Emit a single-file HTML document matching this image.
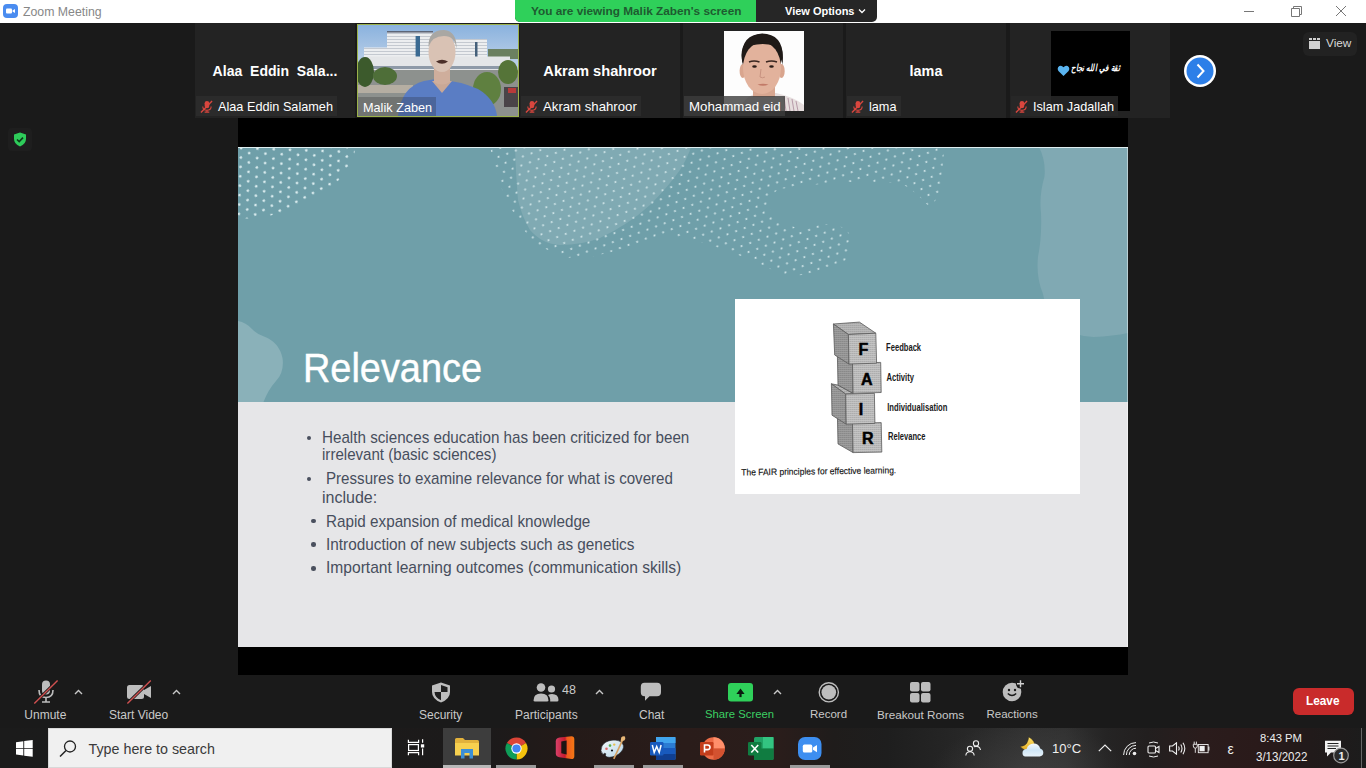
<!DOCTYPE html>
<html><head><meta charset="utf-8">
<style>
*{margin:0;padding:0;box-sizing:border-box}
html,body{width:1366px;height:768px;overflow:hidden;background:#1a1a1a;font-family:"Liberation Sans",sans-serif;position:relative}
.a{position:absolute}
.nw{white-space:nowrap}
#title{left:0;top:0;width:1366px;height:23px;background:#fff}
#title .t{left:23px;top:5px;font-size:12.3px;color:#878787}
#banner{left:515px;top:0;width:362px;height:22px;border-radius:0 0 5px 5px;overflow:hidden;background:#262626}
#banner .g{left:0;top:0;width:241px;height:22px;background:#2fd05a}
#banner .gt{left:16px;top:4px;font-size:11.8px;font-weight:bold;color:#1e5b30}
#banner .vt{left:270px;top:5px;font-size:11px;font-weight:bold;color:#fff}
.tile{top:23px;height:95px;background:#232323;overflow:hidden}
.tile .big{left:0;width:100%;text-align:center;top:39.7px;color:#fff;font-weight:bold;font-size:14.4px}
.tile .nm{left:1px;top:73px;height:20px;background:#2b2b2b;color:#fff;font-size:12.7px;line-height:22px;padding:0 4px 0 22px}
.tile .nm.nomic{padding-left:5px;background:rgba(40,40,40,0.75)}
.mic{left:4px;top:4px;width:13px;height:13px}
#screen{left:238px;top:118px;width:890px;height:557px;background:#000}
#slide{left:238px;top:147px;width:890px;height:500px;background:#e6e6e8;overflow:hidden}
#toolbar{left:0;top:675px;width:1366px;height:53px;background:#1a1a1a}
.tl{color:#c9c9c9;font-size:12px;top:33px}
.car{top:13px}
#taskbar{left:0;top:728px;width:1366px;height:40px;background:radial-gradient(ellipse 100px 55px at 1030px 48px,rgba(75,75,75,0.5),rgba(75,75,75,0) 100%),linear-gradient(90deg,#1b1b1b 0%,#1c1a1a 36%,#241a18 42%,#2a1c1a 50%,#2a1d1b 57%,#1f1c1b 61%,#1e1e1e 65%,#262626 70%,#303030 75%,#313131 78%,#252424 81%,#221f1f 84%,#2a1c1c 88%,#2a1a1a 92%,#211a1a 96%,#1c1c1c 100%)}
</style></head><body>
<div id="title" class="a">
  <svg class="a" style="left:3px;top:4px" width="15" height="14" viewBox="0 0 15 14"><rect x="0" y="0" width="15" height="14" rx="4" fill="#4a8cf0"/><rect x="3" y="4.5" width="6" height="5" rx="1" fill="#fff"/><path d="M9.5 6.5 L12 5 L12 9 L9.5 7.5Z" fill="#fff"/></svg>
  <div class="a t nw">Zoom Meeting</div>
  <svg class="a" style="left:1240px;top:5px" width="110" height="14" viewBox="0 0 110 14">
    <path d="M4 6.5 H14" stroke="#777" stroke-width="1"/>
    <path d="M51.5 3.5 H59.5 V11.5 H51.5Z M53.5 3.5 V1.5 H61.5 V9.5 H59.5" fill="none" stroke="#777" stroke-width="1"/>
    <path d="M96 1 L106 11 M106 1 L96 11" stroke="#777" stroke-width="1"/>
  </svg>
</div>
<div id="banner" class="a"><div class="a g"></div><div class="a gt nw">You are viewing Malik Zaben's screen</div><div class="a vt nw">View Options</div>
  <svg class="a" style="left:343px;top:8px" width="8" height="6" viewBox="0 0 8 6"><path d="M1 1.5 L4 4.5 L7 1.5" fill="none" stroke="#fff" stroke-width="1.3"/></svg>
</div>

<!-- participant strip -->
<div id="strip">
  <div class="a tile" style="left:195px;width:160px">
    <div class="a big nw" style="transform:scaleX(0.975)">Alaa&nbsp; Eddin&nbsp; Sala...</div>
    <div class="a nm nw"><svg class="a mic" width="14" height="14" viewBox="0 0 14 14"><rect x="5" y="1" width="5" height="8" rx="2.5" fill="#d9463e"/><path d="M3 7 Q3 11 7.5 11 Q12 11 12 7 M7.5 11 V13 M5 13 H10" fill="none" stroke="#d9463e" stroke-width="1.2"/><path d="M1 13.5 L13 1" stroke="#d9463e" stroke-width="1.5"/></svg>Alaa Eddin Salameh</div>
  </div>
  <div class="a tile" style="left:357px;width:162px;top:24px;height:93px;border:1px solid #9bb24a;background:#6f8aa3">
    <svg class="a" style="left:0;top:0" width="160" height="91" viewBox="0 0 160 91">
      <defs><linearGradient id="sky" x1="0" y1="0" x2="0" y2="1"><stop offset="0" stop-color="#8ab2de"/><stop offset="0.35" stop-color="#b3cbe6"/><stop offset="1" stop-color="#c8d8e8"/></linearGradient>
      <pattern id="win" width="4" height="3" patternUnits="userSpaceOnUse"><rect width="4" height="3" fill="#eceef0"/><rect y="2" width="4" height="1" fill="#c4c9d0"/></pattern></defs>
      <rect width="160" height="91" fill="url(#sky)"/>
      <rect x="130" y="24" width="30" height="10" fill="#6b8060"/>
      <rect x="6" y="22.5" width="24" height="12" fill="url(#win)"/>
      <rect x="29" y="6.6" width="46" height="27" fill="url(#win)"/>
      <rect x="29" y="6" width="46" height="1.6" fill="#5d6678"/>
      <rect x="57.6" y="11" width="4.4" height="22" fill="#3a6a92"/>
      <rect x="96" y="14" width="33" height="20" fill="url(#win)"/>
      <rect x="117" y="17" width="2.5" height="17" fill="#44607a"/>
      <rect x="10" y="31.5" width="142" height="14" fill="#e4e6e8"/>
      <rect x="14" y="41" width="130" height="3" fill="#8e9aa8"/>
      <rect x="0" y="45" width="160" height="46" fill="#8d918e"/>
      <rect x="0" y="60" width="55" height="8" fill="#b5aea2"/>
      <ellipse cx="7" cy="47" rx="9" ry="15" fill="#3c5a2c"/>
      <ellipse cx="27" cy="51" rx="12" ry="9" fill="#4e6e38"/>
      <ellipse cx="129" cy="64" rx="14" ry="17" fill="#5f8040"/>
      <ellipse cx="150" cy="47" rx="10" ry="12" fill="#557438"/>
      <rect x="146" y="62" width="14" height="20" fill="#4a4448"/>
      <rect x="150" y="63" width="8" height="5" fill="#b83a3a"/>
      <path d="M40 91 Q43 62 66 56 L78 54 Q102 56 120 64 Q137 74 139 91Z" fill="#5a7dc4"/>
      <path d="M74 56 L84 68 L94 56Z" fill="#c9a896"/>
      <path d="M76 40 L76 57 Q84 62 92 57 L92 40Z" fill="#cfae9c"/>
      <ellipse cx="84" cy="27" rx="13.5" ry="20" fill="#d9c2b4"/>
      <path d="M70.5 22 Q70 5 86 5 Q99 6 98.5 24 Q97 11 86 11 Q74 11 70.5 22Z" fill="#a9a7a3"/>
      <path d="M78 36.5 Q84 33 90 36.5 Q84 41 78 36.5Z" fill="#4a2e28"/>
    </svg>
    <div class="a nm nomic nw" style="left:0;top:72px;background:rgba(30,30,30,0.25)">Malik Zaben</div>
  </div>
  <div class="a tile" style="left:520px;width:160px">
    <div class="a big nw" style="transform:scaleX(1.02)">Akram shahroor</div>
    <div class="a nm nw"><svg class="a mic" width="14" height="14" viewBox="0 0 14 14"><rect x="5" y="1" width="5" height="8" rx="2.5" fill="#d9463e"/><path d="M3 7 Q3 11 7.5 11 Q12 11 12 7 M7.5 11 V13 M5 13 H10" fill="none" stroke="#d9463e" stroke-width="1.2"/><path d="M1 13.5 L13 1" stroke="#d9463e" stroke-width="1.5"/></svg><span style="font-size:13.2px">Akram shahroor</span></div>
  </div>
  <div class="a tile" style="left:683px;width:160px">
    <svg class="a" style="left:41px;top:8px" width="80" height="80" viewBox="0 0 80 80">
      <rect width="80" height="80" fill="#fdfdfd"/>
      <path d="M14 80 Q20 67 30 63 L52 62 Q70 66 80 74 V80Z" fill="#e6dede"/>
      <path d="M60 66 L62 80 M64 67 L66 80 M68 68 L70 80 M72 70 L74 80" stroke="#b79aa8" stroke-width="1"/>
      <rect x="29" y="50" width="22" height="16" fill="#d7a690"/>
      <ellipse cx="18.8" cy="40" rx="3.2" ry="7" fill="#d9a58e"/>
      <ellipse cx="57.5" cy="40" rx="3.2" ry="7" fill="#d9a58e"/>
      <ellipse cx="38" cy="24" rx="20.5" ry="21" fill="#1f1a17"/><ellipse cx="38" cy="37" rx="19" ry="26" fill="#e2b29c"/>
      <path d="M18.5 34 Q14 4 38 2.5 Q62 3 58.5 34 Q57 18 50 14.5 Q39 11.5 27 14.5 Q20 19 18.5 34Z" fill="#1f1a17"/>
      <path d="M25 31 Q30 29 35.5 31 M42 31 Q47.5 29 53 31" stroke="#3a2620" stroke-width="1.6" fill="none"/>
      <ellipse cx="30.5" cy="35.5" rx="2.3" ry="1.3" fill="#2a1c18"/>
      <ellipse cx="47.5" cy="35.5" rx="2.3" ry="1.3" fill="#2a1c18"/>
      <path d="M37 38 L36 46 Q38.5 47.5 41 46" stroke="#c89280" stroke-width="1" fill="none"/>
      <path d="M33.5 53.5 Q39 52 44.5 53.5 Q39 56 33.5 53.5Z" fill="#c27a68"/>
    </svg>
    <div class="a nm nomic nw" style="background:rgba(60,60,60,0.8);font-size:13.3px">Mohammad eid</div>
  </div>
  <div class="a tile" style="left:846px;width:160px">
    <div class="a big nw">lama</div>
    <div class="a nm nw"><svg class="a mic" width="14" height="14" viewBox="0 0 14 14"><rect x="5" y="1" width="5" height="8" rx="2.5" fill="#d9463e"/><path d="M3 7 Q3 11 7.5 11 Q12 11 12 7 M7.5 11 V13 M5 13 H10" fill="none" stroke="#d9463e" stroke-width="1.2"/><path d="M1 13.5 L13 1" stroke="#d9463e" stroke-width="1.5"/></svg>lama</div>
  </div>
  <div class="a tile" style="left:1010px;width:160px">
    <div class="a" style="left:41px;top:8px;width:79px;height:80px;background:#000"></div>
    <div class="a nw" style="left:47px;top:39.5px;width:13px;height:12px">
      <svg width="13" height="12" viewBox="0 0 14 13"><path d="M7 12 L1.5 6.5 Q-0.5 3 2.5 1.2 Q5 0 7 2.5 Q9 0 11.5 1.2 Q14.5 3 12.5 6.5Z" fill="#5ab4f0"/></svg>
    </div>
    <div class="a nw" style="left:61px;top:39px;color:#fff;font-size:9.5px;font-weight:bold;font-style:italic;transform:scaleX(0.75);transform-origin:0 0">&#x62B;&#x642;&#x629; &#x641;&#x64A; &#x627;&#x644;&#x644;&#x647; &#x646;&#x62C;&#x627;&#x62D;</div>
    <div class="a nm nw" style="background:rgba(40,40,40,0.85)"><svg class="a mic" width="14" height="14" viewBox="0 0 14 14"><rect x="5" y="1" width="5" height="8" rx="2.5" fill="#d9463e"/><path d="M3 7 Q3 11 7.5 11 Q12 11 12 7 M7.5 11 V13 M5 13 H10" fill="none" stroke="#d9463e" stroke-width="1.2"/><path d="M1 13.5 L13 1" stroke="#d9463e" stroke-width="1.5"/></svg>Islam Jadallah</div>
  </div>
  <svg class="a" style="left:1183px;top:54px" width="34" height="34" viewBox="0 0 34 34"><circle cx="17" cy="17" r="16" fill="#fff"/><circle cx="17" cy="17" r="13.5" fill="#2d7fe8"/><path d="M14.5 10.5 L20.5 17 L14.5 23.5" fill="none" stroke="#fff" stroke-width="2"/></svg>
  <div class="a" style="left:1303px;top:32px;width:54px;height:24px;background:#222;border-radius:6px">
    <svg class="a" style="left:6px;top:6px" width="11" height="11" viewBox="0 0 11 11"><rect x="0" y="3" width="11" height="8" fill="#d0d0d0"/><rect x="0" y="0" width="3" height="2" fill="#d0d0d0"/><rect x="4" y="0" width="3" height="2" fill="#d0d0d0"/><rect x="8" y="0" width="3" height="2" fill="#d0d0d0"/></svg>
    <div class="a nw" style="left:23px;top:4px;color:#d8d8d8;font-size:11.8px">View</div>
  </div>
</div>

<!-- shield -->
<div class="a" style="left:8px;top:128px;width:24px;height:23px;background:#1e1e1e;border-radius:4px"></div>
<svg class="a" style="left:13px;top:132px" width="14" height="15" viewBox="0 0 14 15"><path d="M7 0.5 L13 2.5 V7 Q13 12 7 14.5 Q1 12 1 7 V2.5Z" fill="#2ecc5a"/><path d="M4 7.5 L6.2 9.6 L10 5.6" fill="none" stroke="#0d3a1a" stroke-width="1.6"/></svg>

<div id="screen" class="a"></div>
<div id="slide" class="a">
  <svg class="a" style="left:0;top:0" width="890" height="500" viewBox="0 0 890 500">
    <defs>
      <pattern id="dots" x="0" y="0" width="9.2" height="15.9" patternUnits="userSpaceOnUse" patternTransform="rotate(-20)">
        <circle cx="2.3" cy="3" r="1.05" fill="#d2e7ea"/><circle cx="6.9" cy="10.95" r="1.05" fill="#d2e7ea"/>
      </pattern>
      <pattern id="dots2" x="0" y="0" width="9.4" height="16.3" patternUnits="userSpaceOnUse" patternTransform="rotate(-28)">
        <circle cx="2.3" cy="2.5" r="1.3" fill="#dff0f2"/><circle cx="7" cy="10.65" r="1.3" fill="#dff0f2"/>
      </pattern>
    </defs>
    <rect x="0" y="0" width="890" height="255" fill="#6f9fa9"/>
    <rect x="0" y="255" width="890" height="245" fill="#e6e6e8"/>
    <path d="M801 0 Q808 14 806.5 29.5 Q801 48 803 66 Q804 90 800 109.7 Q798 130 804.7 146 Q810 170 823 179 Q838 190 855.7 190 Q875 189 890 186 L890 0Z" fill="#80a9b3"/>
    <path d="M0 174 Q8 175.5 14 182 Q18 186.5 26 189.5 Q41 195 44.5 211 Q46.5 225 38 234 Q30 243 25.5 255 L0 255Z" fill="#8ab1b9"/>
    <path d="M277 0 Q278 30 280 53 Q284 70 292 83 Q304 97 322 98 Q344 98 362 91 Q390 78 412 58 Q430 40 442 23 Q450 10 453 0Z" fill="#80aab3"/>
    <path d="M252 0 Q256 20 263 40 Q269 56 277 68 Q286 86 298 96 Q318 110 340 112 Q366 108 389.6 100 Q410 92 431.7 89.4 Q460 92 488 103.4 Q506 110 523 117.5 Q540 126 551 129.8 Q566 128 579 124.5 Q596 120 607.4 114 Q614 100 611 86 Q604 78 593 77 Q575 78 558 80.6 Q540 76 533.6 68 Q530 56 533.6 47 Q543 40 558 40 Q585 36 611 35 Q640 34 663.6 36.6 Q680 46 692 61 Q698 54 702 43.7 Q705 25 705.8 5 L706 0Z" fill="url(#dots)"/>
    <path d="M0 0 L118 0 Q112 28 88 44 Q58 66 18 71 L0 72Z" fill="url(#dots2)"/>
    <rect x="0" y="0" width="890" height="1" fill="#dfeef0"/><rect x="889" y="0" width="1" height="500" fill="rgba(255,255,255,0.45)"/>
  </svg>
  <div class="a nw" style="left:64.5px;top:201.4px;font-size:40px;line-height:40px;color:#fff;transform:scaleX(0.947);transform-origin:0 0;-webkit-text-stroke:0.4px #fff">Relevance</div>
  <div class="a" style="left:0;top:0;width:890px;height:500px;color:#474e5d;font-size:15.9px">
    <div class="a" style="left:68.9px;top:288.6px;width:4.5px;height:4.5px;border-radius:50%;background:#4a505e"></div>
    <div class="a" style="left:68.9px;top:329.9px;width:4.5px;height:4.5px;border-radius:50%;background:#4a505e"></div>
    <div class="a" style="left:73.2px;top:371.9px;width:4.5px;height:4.5px;border-radius:50%;background:#4a505e"></div>
    <div class="a" style="left:73.2px;top:395.2px;width:4.5px;height:4.5px;border-radius:50%;background:#4a505e"></div>
    <div class="a" style="left:73.2px;top:419.1px;width:4.5px;height:4.5px;border-radius:50%;background:#4a505e"></div>
    <div class="a nw" style="left:84.3px;top:281.7px;transform:scaleX(0.9559);transform-origin:0 0">Health sciences education has been criticized for been</div>
    <div class="a nw" style="left:84.3px;top:299.4px;transform:scaleX(0.9495);transform-origin:0 0">irrelevant (basic sciences)</div>
    <div class="a nw" style="left:88px;top:322.9px;transform:scaleX(0.951);transform-origin:0 0">Pressures to examine relevance for what is covered</div>
    <div class="a nw" style="left:84.3px;top:341.6px;transform:scaleX(1.0077);transform-origin:0 0">include:</div>
    <div class="a nw" style="left:88px;top:365.6px;transform:scaleX(0.9591);transform-origin:0 0">Rapid expansion of medical knowledge</div>
    <div class="a nw" style="left:88px;top:388.8px;transform:scaleX(0.9645);transform-origin:0 0">Introduction of new subjects such as genetics</div>
    <div class="a nw" style="left:88px;top:412px;transform:scaleX(0.9811);transform-origin:0 0">Important learning outcomes (communication skills)</div>
  </div>
  <div class="a" style="left:497px;top:151.5px;width:345px;height:195.5px;background:#fff;overflow:hidden">
    <svg class="a" style="left:0;top:0" width="345" height="196" viewBox="734.6 298.2 345 196">
      <defs>
        <pattern id="mesh" width="2" height="2" patternUnits="userSpaceOnUse"><rect width="2" height="2" fill="#c9c9c9"/><rect width="1" height="1" fill="#8e8e8e"/></pattern>
        <pattern id="mesh2" width="2" height="2" patternUnits="userSpaceOnUse"><rect width="2" height="2" fill="#a2a2a2"/><rect width="1" height="1" fill="#6e6e6e"/></pattern>
        <pattern id="mesh3" width="2" height="2" patternUnits="userSpaceOnUse"><rect width="2" height="2" fill="#bdbdbd"/><rect width="1" height="1" fill="#8a8a8a"/></pattern>
      </defs>
      <g stroke="#5a5a5a" stroke-width="0.8" stroke-linejoin="round">
        <path d="M837 414.4 L852.1 422.6 L852.7 451.8 L837.6 443.1Z" fill="url(#mesh2)"/>
        <path d="M852.1 422.6 L880.8 421.8 L881.4 451.3 L852.7 451.8Z" fill="url(#mesh)"/>
        <path d="M831 383 L837.6 384.3 L852.7 392.5 L845.3 393.3Z" fill="url(#mesh3)"/>
        <path d="M831 383 L845.3 393.3 L845.8 423.4 L831.6 414.4Z" fill="url(#mesh2)"/>
        <path d="M845.3 393.3 L874 392.5 L874.5 422.6 L845.8 423.4Z" fill="url(#mesh)"/>
        <path d="M837 355 L852.1 362.4 L852.7 392.5 L837.6 384.3Z" fill="url(#mesh2)"/>
        <path d="M852.1 362.4 L880.3 361.6 L880.8 391.7 L852.7 392.5Z" fill="url(#mesh)"/>
        <path d="M833 323.2 L859 321.3 L875.4 332.4 L848 333.7Z" fill="url(#mesh3)"/>
        <path d="M833 323.2 L848 333.7 L848.6 363.3 L834.3 354.2Z" fill="url(#mesh2)"/>
        <path d="M848 333.7 L875.4 332.4 L876.2 362.4 L848.6 363.3Z" fill="url(#mesh)"/>
      </g>
      <g font-family="Liberation Sans" font-weight="bold" fill="#000" stroke="#000" stroke-width="0.5">
        <text x="858.2" y="354" font-size="16">F</text>
        <text x="860.5" y="384.2" font-size="16">A</text>
        <text x="858.3" y="413.8" font-size="16">I</text>
        <text x="861.5" y="442.8" font-size="16">R</text>
      </g>
      <g font-family="Liberation Sans" font-weight="bold" fill="#1a1a1a" font-size="10.4">
        <text x="885.7" y="350" textLength="35" lengthAdjust="spacingAndGlyphs">Feedback</text>
        <text x="886" y="380" textLength="27.6" lengthAdjust="spacingAndGlyphs">Activity</text>
        <text x="886.8" y="410" textLength="60.2" lengthAdjust="spacingAndGlyphs">Individualisation</text>
        <text x="887.7" y="439" textLength="37.3" lengthAdjust="spacingAndGlyphs">Relevance</text>
      </g>
      <text x="740.8" y="473.6" font-family="Liberation Sans" font-size="9.2" fill="#111" stroke="#111" stroke-width="0.15" transform="rotate(-0.8 818 472)" textLength="155" lengthAdjust="spacingAndGlyphs">The FAIR principles for effective learning.</text>
    </svg>
  </div>
</div>
<div id="toolbar" class="a">
  <!-- Unmute -->
  <svg class="a" style="left:33px;top:5px" width="26" height="24" viewBox="0 0 26 24">
    <rect x="9" y="0.5" width="8" height="14" rx="4" fill="#bdbdbd"/>
    <path d="M6 10 Q6 17.5 13 17.5 Q20 17.5 20 10" fill="none" stroke="#bdbdbd" stroke-width="1.6"/>
    <path d="M13 17.5 V21.5 M9 22 H17" stroke="#bdbdbd" stroke-width="1.6"/>
    <path d="M1.3 23.4 L24.6 0.5" stroke="#1a1a1a" stroke-width="3"/>
    <path d="M1.3 23.4 L24.6 0.5" stroke="#d05050" stroke-width="1.4"/>
  </svg>
  <div class="a tl nw" style="left:24.3px">Unmute</div>
  <svg class="a car" style="left:73.5px;top:14px" width="9" height="6" viewBox="0 0 9 6"><path d="M1 5 L4.5 1.5 L8 5" fill="none" stroke="#c8c8c8" stroke-width="1.4"/></svg>
  <!-- Start video -->
  <svg class="a" style="left:126px;top:5px" width="26" height="24" viewBox="0 0 26 24">
    <rect x="1" y="5" width="17" height="14" rx="2.5" fill="#bdbdbd"/>
    <path d="M18 10 L25 6 V18 L18 14Z" fill="#bdbdbd"/>
    <path d="M1.4 23.4 L24.8 0.5" stroke="#1a1a1a" stroke-width="3"/>
    <path d="M1.4 23.4 L24.8 0.5" stroke="#d05050" stroke-width="1.4"/>
  </svg>
  <div class="a tl nw" style="left:109px">Start Video</div>
  <svg class="a car" style="left:172px;top:14px" width="9" height="6" viewBox="0 0 9 6"><path d="M1 5 L4.5 1.5 L8 5" fill="none" stroke="#c8c8c8" stroke-width="1.4"/></svg>
  <!-- Security -->
  <svg class="a" style="left:431px;top:7px" width="20" height="21" viewBox="0 0 20 21">
    <path d="M10 0.5 L19 3.5 V10 Q19 17 10 20.5 Q1 17 1 10 V3.5Z" fill="#bdbdbd"/>
    <path d="M10 3 L16.5 5.2 V10 H10Z M10 10 H3.5 Q3.8 15.5 10 18.2Z" fill="#1f1f1f"/>
  </svg>
  <div class="a tl nw" style="left:419px">Security</div>
  <!-- Participants -->
  <svg class="a" style="left:533px;top:8px" width="26" height="19" viewBox="0 0 26 19">
    <circle cx="8" cy="4.5" r="4.3" fill="#bdbdbd"/>
    <circle cx="18.5" cy="6" r="3.6" fill="#bdbdbd"/>
    <path d="M0.5 17.5 Q0.5 10.5 8 10.5 Q15.5 10.5 15.5 17.5 Q15.5 18.5 14 18.5 H2 Q0.5 18.5 0.5 17.5Z" fill="#bdbdbd"/>
    <path d="M15 12 Q17 11 19 11 Q25.5 11 25.5 17 Q25.5 18.5 24 18.5 H17.2 Q17.5 14 15 12Z" fill="#bdbdbd"/>
  </svg>
  <div class="a nw" style="left:562px;top:8px;color:#c9c9c9;font-size:12.5px">48</div>
  <div class="a tl nw" style="left:515px">Participants</div>
  <svg class="a car" style="left:595px;top:14px" width="9" height="6" viewBox="0 0 9 6"><path d="M1 5 L4.5 1.5 L8 5" fill="none" stroke="#c8c8c8" stroke-width="1.4"/></svg>
  <!-- Chat -->
  <svg class="a" style="left:640px;top:7px" width="22" height="20" viewBox="0 0 22 20">
    <path d="M4.5 0.8 H17 Q21 0.8 21 4.8 V10.2 Q21 14.2 17 14.2 H9.5 L5 18.8 V14.2 H4.5 Q0.8 14.2 0.8 10.2 V4.8 Q0.8 0.8 4.5 0.8Z" fill="#bdbdbd"/>
  </svg>
  <div class="a tl nw" style="left:639px">Chat</div>
  <!-- Share screen -->
  <svg class="a" style="left:727.5px;top:7.5px" width="25" height="19" viewBox="0 0 25 19">
    <rect x="0" y="0" width="25" height="18.6" rx="3" fill="#2fd05a"/>
    <path d="M8.4 11 L12.5 5.6 L16.6 11Z" fill="#0b1a0f"/><rect x="11.4" y="9.5" width="2.2" height="4.6" fill="#0b1a0f"/>
  </svg>
  <div class="a tl nw" style="left:705px;color:#3ccf63;font-size:11.3px">Share Screen</div>
  <svg class="a car" style="left:772.5px;top:14px" width="9" height="6" viewBox="0 0 9 6"><path d="M1 5 L4.5 1.5 L8 5" fill="none" stroke="#c8c8c8" stroke-width="1.4"/></svg>
  <!-- Record -->
  <svg class="a" style="left:818px;top:6.5px" width="22" height="21" viewBox="0 0 22 21">
    <circle cx="10.8" cy="10.3" r="9.6" fill="none" stroke="#bdbdbd" stroke-width="1.4"/>
    <circle cx="10.8" cy="10.3" r="7.3" fill="#bdbdbd"/>
  </svg>
  <div class="a tl nw" style="left:810px;font-size:11.5px">Record</div>
  <!-- Breakout -->
  <svg class="a" style="left:909.5px;top:7px" width="21" height="21" viewBox="0 0 21 21">
    <rect x="0" y="0" width="9.5" height="9.5" rx="2" fill="#bdbdbd"/><rect x="11" y="0" width="9.5" height="9.5" rx="2" fill="#bdbdbd"/>
    <rect x="0" y="11" width="9.5" height="9.5" rx="2" fill="#bdbdbd"/><rect x="11" y="11" width="9.5" height="9.5" rx="2" fill="#bdbdbd"/>
  </svg>
  <div class="a tl nw" style="left:877px;font-size:11.7px">Breakout Rooms</div>
  <!-- Reactions -->
  <svg class="a" style="left:1002px;top:4px" width="24" height="23" viewBox="0 0 24 23">
    <circle cx="10" cy="13" r="9.3" fill="#bdbdbd"/>
    <circle cx="7" cy="11" r="1.2" fill="#1a1a1a"/><circle cx="13" cy="11" r="1.2" fill="#1a1a1a"/>
    <path d="M5.8 14.5 Q10 18.5 14.2 14.5" fill="none" stroke="#1a1a1a" stroke-width="1.4"/>
    <circle cx="18.5" cy="5" r="4.5" fill="#1a1a1a"/>
    <path d="M18.5 1.2 V8.2 M15 4.7 H22" stroke="#d0d0d0" stroke-width="1.4"/>
  </svg>
  <div class="a tl nw" style="left:986.5px;font-size:11.5px">Reactions</div>
  <!-- Leave -->
  <div class="a" style="left:1293px;top:13px;width:61px;height:27px;background:#c92b2b;border-radius:6px"></div>
  <div class="a nw" style="left:1306px;top:19px;color:#fff;font-size:12.5px;font-weight:bold;transform:scaleX(0.945);transform-origin:0 0">Leave</div>
</div>
<div id="taskbar" class="a">
  <svg class="a" style="left:16px;top:12px" width="17" height="17" viewBox="0 0 17 17">
    <path d="M0 2.3 L7.3 1.2 V7.9 H0Z M8.2 1.1 L16.7 0 V7.9 H8.2Z M0 8.8 H7.3 V15.6 L0 14.6Z M8.2 8.8 H16.7 V16.8 L8.2 15.7Z" fill="#fff"/>
  </svg>
  <div class="a" style="left:48px;top:0;width:344px;height:40px;background:#f0f0f0;border:1px solid #d8d8d8"></div>
  <svg class="a" style="left:59px;top:12px" width="18" height="17" viewBox="0 0 18 17">
    <circle cx="11" cy="6.5" r="5.5" fill="none" stroke="#222" stroke-width="1.3"/>
    <path d="M7 10.5 L1 16.5" stroke="#222" stroke-width="1.5"/>
  </svg>
  <div class="a nw" style="left:88.5px;top:12.5px;color:#3a3a3a;font-size:14.3px">Type here to search</div>
  <svg class="a" style="left:400px;top:4px" width="30" height="32" viewBox="400 732 30 32">
    <path d="M408.4 739.8 V742.3 H418.6 V739.8 M408.4 755.2 V752.7 H418.6 V755.2" fill="none" stroke="#fff" stroke-width="1.2"/>
    <rect x="408.6" y="744.6" width="9.8" height="5.9" fill="none" stroke="#fff" stroke-width="1.2"/>
    <path d="M422.6 739.3 V742.8 M422.6 748.6 V755.2" stroke="#fff" stroke-width="1.2"/>
    <rect x="420.9" y="744.3" width="3.3" height="3.2" fill="#fff"/>
  </svg>
  <!-- explorer highlighted -->
  <div class="a" style="left:443px;top:0;width:48px;height:40px;background:#3d3d3d"></div>
  <div class="a" style="left:443px;top:37px;width:48px;height:3px;background:#b8b8b8"></div>
  <svg class="a" style="left:455px;top:10px" width="24" height="21" viewBox="0 0 24 21">
    <path d="M0 1.5 Q0 0 1.5 0 H8 L10 2 H22.5 Q24 2 24 3.5 V17 H0Z" fill="#e2b23c"/>
    <path d="M0 5 H24 V17.5 H0Z" fill="#f7d04f"/>
    <path d="M6 11 H18 V20.5 H14.5 V15 H9.5 V20.5 H6Z" fill="#3b8fd6"/>
  </svg>
  <!-- chrome -->
  <div class="a" style="left:496px;top:37px;width:40px;height:3px;background:#9a9a9a"></div>
  <svg class="a" style="left:504.5px;top:8.5px" width="23" height="23" viewBox="0 0 24 24">
    <path d="M12 12 L2.04 6.25 A11.5 11.5 0 0 1 21.96 6.25Z" fill="#db4437"/>
    <path d="M12 12 L21.96 6.25 A11.5 11.5 0 0 1 12 23.5Z" fill="#f4c20d"/>
    <path d="M12 12 L12 23.5 A11.5 11.5 0 0 1 2.04 6.25Z" fill="#0f9d58"/>
    <circle cx="12" cy="12" r="5.4" fill="#fff"/>
    <circle cx="12" cy="12" r="4.3" fill="#4285f4"/>
  </svg>
  <!-- office -->
  <svg class="a" style="left:554px;top:6px" width="22" height="26" viewBox="554 734 22 26">
    <defs><linearGradient id="of" x1="0" y1="0" x2="1" y2="0"><stop offset="0" stop-color="#d8406a"/><stop offset="0.5" stop-color="#c41a2c"/><stop offset="0.6" stop-color="#ee5a1e"/><stop offset="1" stop-color="#f47814"/></linearGradient></defs>
    <path d="M559.5 737.4 L571.5 736.2 Q574.3 736.2 574.3 739.2 V756.2 Q574.3 759.2 571.5 759 L559.5 757.2 Q555.8 756.6 555.8 753.4 V741.2 Q555.8 737.8 559.5 737.4Z" fill="url(#of)"/>
    <path d="M561.3 741.6 L566.6 740.6 V754.4 L561.3 753.2Z" fill="#1c1514"/>
  </svg>
  <!-- paint -->
  <div class="a" style="left:594px;top:37px;width:40px;height:3px;background:#9a9a9a"></div>
  <svg class="a" style="left:598px;top:6px" width="30" height="26" viewBox="598 734 30 26">
    <defs><linearGradient id="pal" x1="0" y1="0" x2="1" y2="1"><stop offset="0" stop-color="#f4f8fa"/><stop offset="1" stop-color="#b8d8ea"/></linearGradient></defs>
    <path d="M603 754.5 Q599.5 751 602 746 Q605 741 612 740.2 Q619.5 739.6 622.5 743.5 Q625 747.5 621 752 Q616.5 756.8 609.5 757.3 Q606 757.5 605.5 755.5 Q606.5 753 604.5 753.3Z" fill="url(#pal)" stroke="#20242a" stroke-width="0.6"/>
    <circle cx="606.5" cy="748.8" r="1.3" fill="#e06a6a"/><circle cx="610" cy="745.6" r="1.3" fill="#58b050"/><circle cx="614.2" cy="744.6" r="1.2" fill="#e8c050"/><circle cx="612" cy="750.5" r="1.1" fill="#101418"/>
    <path d="M613.8 758.8 L622.2 740.8" stroke="#d6a060" stroke-width="1.6"/>
    <path d="M620.6 741.8 L621.2 737.5 Q622.8 735.8 625 736.6 Q625.8 738.6 624.3 740.6Z" fill="#e8b878"/>
  </svg>
  <!-- word -->
  <div class="a" style="left:643px;top:37px;width:40px;height:3px;background:#9a9a9a"></div>
  <svg class="a" style="left:650px;top:8.5px" width="26" height="23" viewBox="0 0 26 23">
    <rect x="6" y="0" width="19.5" height="23" rx="1.5" fill="#2b7cd3"/>
    <rect x="6" y="0" width="19.5" height="6" fill="#41a5ee"/>
    <rect x="6" y="11" width="19.5" height="6" fill="#185abd"/>
    <rect x="6" y="17" width="19.5" height="6" rx="1" fill="#103f91"/>
    <rect x="0" y="5" width="13.5" height="13.5" rx="1.2" fill="#185abd"/>
    <path d="M2.3 8 L4.2 15.5 L6.7 9.5 L9.2 15.5 L11.1 8" fill="none" stroke="#fff" stroke-width="1.5"/>
  </svg>
  <!-- powerpoint -->
  <svg class="a" style="left:700px;top:8.5px" width="25" height="23" viewBox="0 0 25 23">
    <circle cx="13.5" cy="11.5" r="11.3" fill="#ed6c47"/>
    <path d="M13.5 0.2 A11.3 11.3 0 0 1 24.8 11.5 H13.5Z" fill="#ff8f6b"/>
    <path d="M13.5 11.5 H24.8 A11.3 11.3 0 0 1 13.5 22.8Z" fill="#d35230"/>
    <rect x="0" y="5" width="13.5" height="13.5" rx="1.2" fill="#c43e1c"/>
    <path d="M4.5 15.5 V8 H7.5 Q10 8 10 10.3 Q10 12.6 7.5 12.6 H4.5" fill="none" stroke="#fff" stroke-width="1.6"/>
  </svg>
  <!-- excel -->
  <svg class="a" style="left:748px;top:8.5px" width="26" height="23" viewBox="0 0 26 23">
    <rect x="6" y="0" width="19.5" height="23" rx="1.5" fill="#21a366"/>
    <rect x="15" y="0" width="10.5" height="11.5" fill="#33c481"/>
    <rect x="6" y="11.5" width="19.5" height="11.5" rx="1" fill="#107c41"/>
    <rect x="0" y="5" width="13.5" height="13.5" rx="1.2" fill="#107c41"/>
    <path d="M3.3 8 L10.2 15.5 M10.2 8 L3.3 15.5" fill="none" stroke="#fff" stroke-width="1.6"/>
  </svg>
  <!-- zoom -->
  <div class="a" style="left:790px;top:37px;width:40px;height:3px;background:#9a9a9a"></div>
  <svg class="a" style="left:798px;top:8.5px" width="24" height="23" viewBox="0 0 24 23">
    <rect x="0" y="0" width="23.5" height="23" rx="7" fill="#3d8ef0"/>
    <rect x="4.8" y="7.6" width="9.5" height="8" rx="1.6" fill="#fff"/>
    <path d="M15 10.5 L19 8 V15.2 L15 12.7Z" fill="#fff"/>
  </svg>
  <!-- people -->
  <svg class="a" style="left:965px;top:12px" width="16" height="16" viewBox="0 0 16 16">
    <circle cx="5" cy="8.8" r="2.6" fill="none" stroke="#eee" stroke-width="1.1"/>
    <path d="M0.8 15.5 Q1.3 11.8 5 11.8 Q8.7 11.8 9.2 15.5" fill="none" stroke="#eee" stroke-width="1.1"/>
    <circle cx="11" cy="3.4" r="2.6" fill="none" stroke="#eee" stroke-width="1.1"/>
    <path d="M8.8 6.8 Q11 6 13 6.6 Q15.2 7.6 15.5 10" fill="none" stroke="#eee" stroke-width="1.1"/>
  </svg>
  <!-- weather -->
  <svg class="a" style="left:1015px;top:4px" width="35" height="30" viewBox="1015 732 35 30">
    <defs><linearGradient id="cl" x1="0" y1="0" x2="0" y2="1"><stop offset="0" stop-color="#f2f8fc"/><stop offset="0.5" stop-color="#cfe6f6"/><stop offset="1" stop-color="#e6f2fa"/></linearGradient>
    <linearGradient id="mn" x1="0" y1="0" x2="0" y2="1"><stop offset="0" stop-color="#ffe26a"/><stop offset="1" stop-color="#e0a820"/></linearGradient></defs>
    <path d="M1028.8 737 Q1036.5 741 1034 748.5 Q1028 754 1020 746.5 Q1025 746 1026.8 743.2 Q1028.3 740.5 1028.8 737Z" fill="url(#mn)" stroke="#2a2410" stroke-width="0.4"/>
    <path d="M1025.3 756.4 Q1022.5 756.4 1022.5 753 Q1022.5 749.3 1026.6 749 Q1028.3 743.8 1033.6 743.6 Q1038.7 743.8 1040.2 748.4 Q1043.3 749.4 1043.3 752.6 Q1043.3 756.4 1039.6 756.4Z" fill="url(#cl)"/>
  </svg>
  <div class="a nw" style="left:1052px;top:12.5px;color:#f0f0f0;font-size:13px">10°C</div>
  <svg class="a" style="left:1098px;top:16px" width="14" height="8" viewBox="0 0 14 8"><path d="M0.8 7.2 L7 1 L13.2 7.2" fill="none" stroke="#eee" stroke-width="1.2"/></svg>
  <!-- wifi -->
  <svg class="a" style="left:1123px;top:14px" width="14" height="14" viewBox="0 0 14 14">
    <path d="M0.6 13 A12.4 12.4 0 0 1 13 0.6 M3.4 13 A9.6 9.6 0 0 1 13 3.4 M6.2 13 A6.8 6.8 0 0 1 13 6.2" fill="none" stroke="#eee" stroke-width="1"/>
    <circle cx="11.5" cy="11.5" r="1.8" fill="#eee"/>
  </svg>
  <!-- meet -->
  <svg class="a" style="left:1147px;top:13px" width="13" height="17" viewBox="0 0 13 17">
    <rect x="1" y="5" width="7.5" height="7" rx="1" fill="none" stroke="#eee" stroke-width="1.1"/>
    <path d="M8.5 7.5 L12 5.5 V11.5 L8.5 9.5" fill="none" stroke="#eee" stroke-width="1.1"/>
    <path d="M2 2 Q6.5 0 11 2 M2 15 Q6.5 17 11 15" fill="none" stroke="#eee" stroke-width="1"/>
  </svg>
  <!-- volume -->
  <svg class="a" style="left:1169px;top:13.5px" width="17" height="13" viewBox="0 0 17 13">
    <path d="M0.6 4 H3.5 L7.5 0.8 V12.2 L3.5 9 H0.6Z" fill="none" stroke="#eee" stroke-width="1.1"/>
    <path d="M9.5 4.5 Q10.8 6.5 9.5 8.5 M11.8 2.5 Q14.2 6.5 11.8 10.5 M14 0.8 Q17.6 6.5 14 12.2" fill="none" stroke="#eee" stroke-width="1.1"/>
  </svg>
  <!-- battery -->
  <svg class="a" style="left:1190px;top:12px" width="22" height="15" viewBox="1190 740 22 15">
    <path d="M1194.2 741.6 V744 M1196.4 741.6 V744" stroke="#f0f0f0" stroke-width="0.9"/>
    <path d="M1193.3 744.3 H1197.3 V746 Q1197.3 748.2 1195.3 748.2 Q1193.3 748.2 1193.3 746Z" fill="none" stroke="#f0f0f0" stroke-width="0.9"/>
    <path d="M1195.3 748.2 V752.8" stroke="#f0f0f0" stroke-width="0.9"/>
    <rect x="1198.3" y="744.5" width="9.8" height="8.2" fill="none" stroke="#f0f0f0" stroke-width="0.9"/>
    <rect x="1199.5" y="745.9" width="5.2" height="5.4" fill="#f0f0f0"/>
    <rect x="1208.3" y="746.6" width="1.1" height="4" fill="#f0f0f0"/>
  </svg>
  <div class="a nw" style="left:1227.5px;top:13px;color:#eee;font-size:14px">&#949;</div>
  <div class="a nw" style="left:1260px;top:3.3px;color:#eee;font-size:11.8px;transform:scaleX(0.955);transform-origin:0 0">8:43 PM</div>
  <div class="a nw" style="left:1255.5px;top:22px;color:#eee;font-size:11.9px;transform:scaleX(0.97);transform-origin:0 0">3/13/2022</div>
  <!-- notification -->
  <svg class="a" style="left:1324px;top:12px" width="26" height="24" viewBox="0 0 26 24">
    <path d="M1 0.8 H17 V12.5 H7 L3 16.5 V12.5 H1Z" fill="#f2f2f2"/>
    <path d="M3.5 3.5 H14.5 M3.5 6 H14.5 M3.5 8.5 H12" stroke="#222" stroke-width="1"/>
    <circle cx="17" cy="15.5" r="7.3" fill="#2a2a2a" stroke="#9a9a9a" stroke-width="1.2"/>
    <text x="14.6" y="20" font-family="Liberation Sans" font-size="11" font-weight="bold" fill="#eee">1</text>
  </svg>
  <div class="a" style="left:1361px;top:0;width:1px;height:40px;background:#666"></div>
</div>
</body></html>
